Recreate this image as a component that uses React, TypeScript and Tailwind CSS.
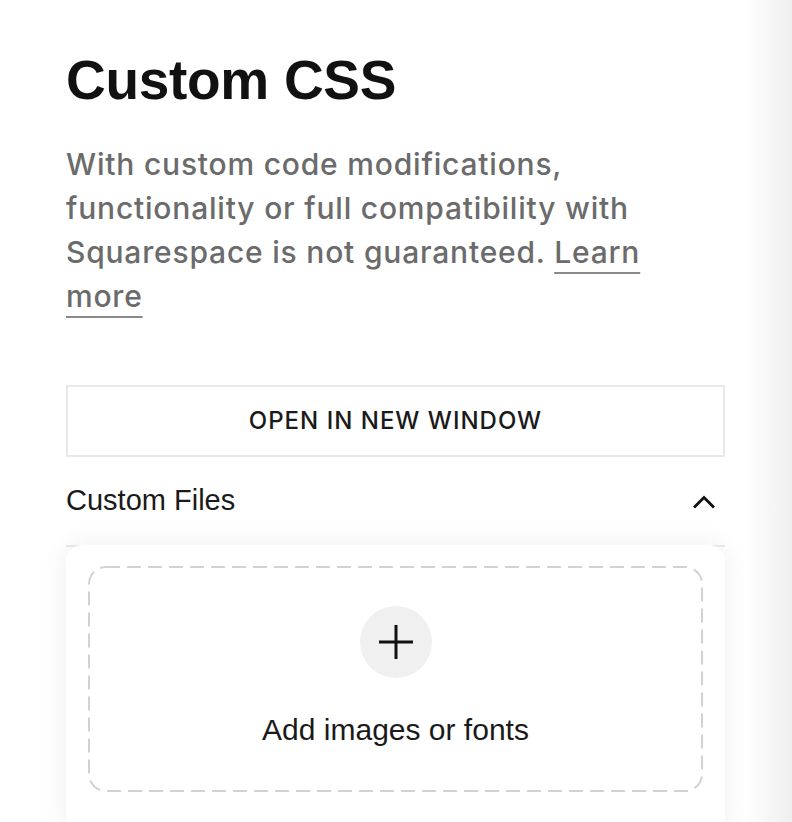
import React from 'react';

const sans = { fontFamily: '"Liberation Sans", Arial, sans-serif' };
const body = { fontFamily: 'Inter, "Liberation Sans", sans-serif' };

function ChevronUp() {
  return (
    <svg width="22" height="15" viewBox="0 0 22 15" fill="none">
      <polyline points="2,12.5 11,3.5 20,12.5" stroke="#111" strokeWidth="2.8" strokeLinecap="square" />
    </svg>
  );
}

function PlusIcon() {
  return (
    <svg width="36" height="36" viewBox="0 0 36 36">
      <line x1="18" y1="1" x2="18" y2="35" stroke="#111" strokeWidth="3" />
      <line x1="1" y1="18" x2="35" y2="18" stroke="#111" strokeWidth="3" />
    </svg>
  );
}

export default function App() {
  return (
    <div className="flex h-[822px] w-[792px] overflow-hidden bg-white">
      {/* Panel */}
      <div className="w-[745px] shrink-0 pl-[66px] pr-[20px]">
        <h1 className="mt-[53px] text-[55px] font-bold leading-none tracking-[-0.3px] text-[#111]" style={sans}>
          Custom CSS
        </h1>
        <p className="mt-[34px] whitespace-nowrap text-[30px] font-medium leading-[44px] tracking-[0.8px] text-[#6b6b6b]" style={body}>
          With custom code modifications,
          <br />
          functionality or full compatibility with
          <br />
          Squarespace is not guaranteed.{' '}
          <a className="underline decoration-[#8a8a8a] decoration-2 underline-offset-[9px]">
            Learn
            <br />
            more
          </a>
        </p>

        <button
          className="mt-[67px] flex h-[72px] w-full items-center justify-center border-2 border-[#e8e8e8] bg-white text-[24px] font-medium tracking-[1px] text-[#1a1a1a]"
          style={body}
        >
          OPEN IN NEW WINDOW
        </button>

        {/* Custom Files accordion */}
        <div className="flex h-[90px] items-center justify-between border-b-2 border-[#ececec] pr-[10px]">
          <span className="text-[29px] text-[#1a1a1a]" style={sans}>Custom Files</span>
          <ChevronUp />
        </div>

        <div className="-mt-[2px] rounded-[16px] bg-white px-[22px] pt-[21px] pb-[40px] shadow-[0_0_28px_rgba(0,0,0,0.07)]">
          <div className="relative flex h-[226px] flex-col items-center pt-[40px]">
            <svg className="absolute inset-0 h-full w-full" preserveAspectRatio="none">
              <rect x="1" y="1" width="613" height="224" rx="17" fill="none" stroke="#d2d2d2" strokeWidth="2" strokeDasharray="14 7" />
            </svg>
            <div className="flex h-[72px] w-[72px] items-center justify-center rounded-full bg-[#f0f0f0]">
              <PlusIcon />
            </div>
            <span className="mt-[34px] text-[30px] leading-[36px] text-[#1a1a1a]" style={sans}>
              Add images or fonts
            </span>
          </div>
        </div>
      </div>

      {/* Edge shade */}
      <div className="flex-1 bg-gradient-to-r from-white to-[#efefef]" />
    </div>
  );
}
